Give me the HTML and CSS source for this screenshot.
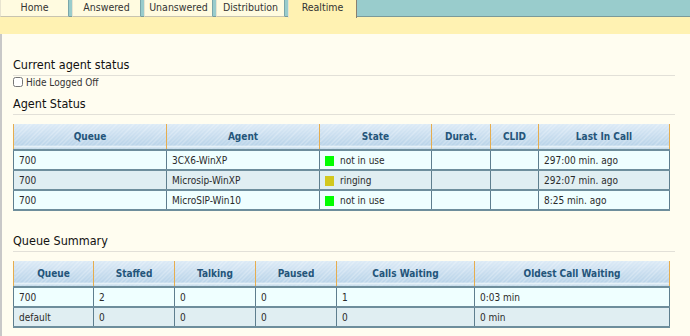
FILE: index.html
```html
<!DOCTYPE html>
<html lang="en">
<head>
    <meta charset="UTF-8">
    <title>Realtime</title>
    <link rel="stylesheet" href="styles.css">
</head>
<body>
<ul id="tabs">
    <li>Home</li>
    <li>Answered</li>
    <li>Unanswered</li>
    <li>Distribution</li>
    <li class="active">Realtime</li>
</ul>
<div id="band"></div>
<div id="main">
    <h2 class="first">Current agent status</h2>
    <label class="hide"><input type="checkbox"> Hide Logged Off</label>

    <h2>Agent Status</h2>
    <div class="box">
        <table class="grid agents">
            <thead>
                <tr>
                    <th class="c1">Queue</th>
                    <th class="c2">Agent</th>
                    <th class="c3">State</th>
                    <th class="c4">Durat.</th>
                    <th class="c5">CLID</th>
                    <th>Last In Call</th>
                </tr>
            </thead>
            <tbody>
                <tr>
                    <td>700</td>
                    <td>3CX6-WinXP</td>
                    <td><span class="dot free"></span>not in use</td>
                    <td></td>
                    <td></td>
                    <td>297:00 min. ago</td>
                </tr>
                <tr class="odd">
                    <td>700</td>
                    <td>Microsip-WinXP</td>
                    <td><span class="dot ring"></span>ringing</td>
                    <td></td>
                    <td></td>
                    <td>292:07 min. ago</td>
                </tr>
                <tr>
                    <td>700</td>
                    <td>MicroSIP-Win10</td>
                    <td><span class="dot free"></span>not in use</td>
                    <td></td>
                    <td></td>
                    <td>8:25 min. ago</td>
                </tr>
            </tbody>
        </table>
    </div>

    <h2 class="second">Queue Summary</h2>
    <div class="box">
        <table class="grid summary">
            <thead>
                <tr>
                    <th class="s1">Queue</th>
                    <th class="s2">Staffed</th>
                    <th class="s3">Talking</th>
                    <th class="s4">Paused</th>
                    <th class="s5">Calls Waiting</th>
                    <th>Oldest Call Waiting</th>
                </tr>
            </thead>
            <tbody>
                <tr>
                    <td>700</td>
                    <td>2</td>
                    <td>0</td>
                    <td>0</td>
                    <td>1</td>
                    <td>0:03 min</td>
                </tr>
                <tr class="odd">
                    <td>default</td>
                    <td>0</td>
                    <td>0</td>
                    <td>0</td>
                    <td>0</td>
                    <td>0 min</td>
                </tr>
            </tbody>
        </table>
    </div>
</div>
</body>
</html>
```

FILE: styles.css
```css
*{
    margin: 0;
    padding: 0;
    box-sizing: border-box;
}
body{
    background: #fffdf0;
    font-family: "DejaVu Sans Condensed", "DejaVu Sans", sans-serif;
    font-size: 10px;
    color: #333;
}
/* tabs */
#tabs{
    list-style: none;
    display: flex;
    height: 17px;
    background: #99cccc;
    border-bottom: 1px solid #7a9a9a;
}
#tabs li{
    width: 69px;
    margin-right: 3px;
    height: 17px;
    line-height: 15px;
    text-align: center;
    background: #fffbe0;
    border-left: 1px solid #e8e4d0;
    border-right: 1px solid #7aa6aa;
    border-bottom: 1px solid #c8c4b0;
    font-family: "DejaVu Sans Condensed", sans-serif;
    font-size: 10.5px;
    color: #333;
}
#tabs li.active{
    background: #fff2b2;
    border-bottom: 0;
    border-right: 1px solid #8a8070;
    height: 18px;
}
#band{
    height: 17px;
    background: #fff2b2;
}
#main{
    border-left: 2px solid #c8c8c8;
    padding: 23px 15px 20px 11px;
    min-height: 302px;
}
h2{
    font-size: 12.5px;
    font-weight: normal;
    color: #111;
    line-height: 16px;
    padding-bottom: 2px;
    border-bottom: 1px solid #e2e0d8;
    margin-top: 9px;
}
h2.first{
    margin-top: 0;
}
h2.second{
    margin-top: 22px;
}
.hide{
    display: flex;
    align-items: center;
    gap: 3px;
    height: 10px;
    margin-top: 1px;
    font-size: 10px;
    color: #333;
}
.hide input{
    width: 10px;
    height: 10px;
    margin: 0;
}
.box{
    padding-right: 5px;
    margin-top: 9px;
}
/* tables */
.grid{
    width: 100%;
    border-collapse: collapse;
    table-layout: fixed;
}
.grid th{
    height: 26px;
    font-size: 10px;
    font-weight: bold;
    color: #24557a;
    text-align: center;
    border-left: 1px solid #e6ad4e;
    border-right: 1px solid #e6ad4e;
    background:
        linear-gradient(to bottom, rgba(255,255,255,0) 85%, rgba(240,248,252,0.9) 88%, rgba(200,220,235,0.6) 100%),
        repeating-linear-gradient(135deg, rgba(255,255,255,0.25) 0 1px, rgba(255,255,255,0) 1px 3px),
        linear-gradient(to bottom, #dceaf6, #b4d0e6);
}
.grid td{
    height: 20px;
    padding: 0 5px;
    border-top: 2px solid #6e8e9c;
    border-bottom: 2px solid #6e8e9c;
    border-left: 1px solid #5e7e8e;
    border-right: 1px solid #5e7e8e;
    background: #efffff;
    white-space: nowrap;
    color: #2a2a2a;
}
.grid tr.odd td{
    background: #e0eef2;
}
.dot{
    display: inline-block;
    width: 9px;
    height: 10px;
    margin-right: 6px;
    vertical-align: -2px;
}
.free{
    background: #00ff00;
}
.ring{
    background: #d2c81e;
}
.agents .c1, .agents .c2{ width: 153px; }
.agents .c3{ width: 112px; }
.agents .c4{ width: 59px; }
.agents .c5{ width: 48px; }
.summary .s1{ width: 80px; }
.summary .s2, .summary .s3, .summary .s4{ width: 81px; }
.summary .s5{ width: 138px; }
```
